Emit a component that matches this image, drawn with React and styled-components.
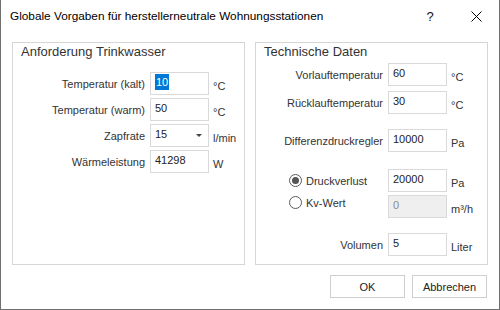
import styled, { createGlobalStyle } from "styled-components";

const GlobalStyle = createGlobalStyle`
  html, body {
    margin: 0;
    padding: 0;
    background: #ffffff;
  }
  * {
    box-sizing: border-box;
  }
`;

const Window = styled.div`
  width: 500px;
  height: 310px;
  display: flex;
  flex-direction: column;
  background: #ffffff;
  border: 1px solid #6f6f6f;
  border-top: none;
  font-family: "Liberation Sans", Arial, sans-serif;
  color: #333;
`;

const TitleBar = styled.div`
  height: 32px;
  display: flex;
  align-items: center;
  padding-left: 9px;
`;

const Title = styled.div`
  flex: 1;
  font-size: 11.8px;
  color: #000;
`;

const CaptionButton = styled.div`
  width: 46px;
  height: 32px;
  display: flex;
  align-items: center;
  justify-content: center;
  font-size: 13px;
  color: #111;
`;

const Body = styled.div`
  display: flex;
  gap: 10px;
  padding: 10px 11px 0 11px;
`;

const Group = styled.div`
  width: 233px;
  height: 223px;
  border: 1px solid #d6d6d6;
  padding: 1px 0 0 0;
`;

const GroupTitle = styled.div`
  font-size: 13px;
  line-height: 16px;
  padding-left: 8px;
  color: #333;
  margin-bottom: ${(p) => p.$after}px;
`;

const FieldRow = styled.div`
  display: flex;
  align-items: center;
  height: 23px;
  margin-top: ${(p) => p.$gap || 0}px;
`;

const Label = styled.div`
  width: ${(p) => p.$w}px;
  padding-right: 5px;
  text-align: right;
  font-size: 11px;
  color: #333;
  white-space: nowrap;
`;

const RadioLabel = styled.label`
  width: ${(p) => p.$w}px;
  padding-left: 33px;
  display: flex;
  align-items: center;
  gap: 4px;
  font-size: 11px;
  color: #333;
  align-self: ${(p) => (p.$top ? "flex-start" : "center")};
  margin-top: ${(p) => (p.$top ? 1 : 0)}px;
`;

const RadioCircle = styled.span`
  width: 13px;
  height: 13px;
  border-radius: 50%;
  border: 1px solid #5a5a5a;
  display: flex;
  align-items: center;
  justify-content: center;
  background: #fff;

  &::after {
    content: "";
    width: 7px;
    height: 7px;
    border-radius: 50%;
    background: ${(p) => (p.$checked ? "#555" : "transparent")};
  }
`;

const TextBox = styled.div`
  width: 59px;
  height: 23px;
  border: 1px solid #d9d9d9;
  background: ${(p) => (p.$disabled ? "#efefef" : "#fff")};
  color: ${(p) => (p.$disabled ? "#8a8a8a" : "#222")};
  font-size: 11px;
  line-height: 14px;
  padding: 2px 0 0 4px;
  display: flex;
  align-items: flex-start;
  position: relative;
`;

const Selected = styled.span`
  background: #0078d7;
  color: #fff;
  padding: 1px;
  margin-top: -1px;
`;

const DropArrow = styled.span`
  position: absolute;
  right: 6px;
  top: 9px;
  width: 0;
  height: 0;
  border-left: 3px solid transparent;
  border-right: 3px solid transparent;
  border-top: 3px solid #444;
`;

const Unit = styled.div`
  margin-left: 4px;
  padding-top: 4px;
  font-size: 11px;
  color: #333;
  white-space: nowrap;
`;

const Footer = styled.div`
  display: flex;
  justify-content: flex-end;
  gap: 7px;
  padding: 10px 12px 0 0;
`;

const Button = styled.div`
  width: 75px;
  height: 23px;
  border: 1px solid #cfcfcf;
  background: #fff;
  display: flex;
  align-items: center;
  justify-content: center;
  font-size: 11px;
  color: #222;
`;

const CloseIcon = () => (
  <svg width="11" height="11" viewBox="0 0 11 11">
    <path d="M0.5 0.5 L10.5 10.5 M10.5 0.5 L0.5 10.5" stroke="#000" strokeWidth="1" />
  </svg>
);

const left = [
  { label: "Temperatur (kalt)", value: "10", unit: "°C", selected: true },
  { label: "Temperatur (warm)", value: "50", unit: "°C" },
  { label: "Zapfrate", value: "15", unit: "l/min", combo: true },
  { label: "Wärmeleistung", value: "41298", unit: "W" },
];

export default function App() {
  return (
    <>
      <GlobalStyle />
      <Window>
        <TitleBar>
          <Title>Globale Vorgaben für herstellerneutrale Wohnungsstationen</Title>
          <CaptionButton>?</CaptionButton>
          <CaptionButton>
            <CloseIcon />
          </CaptionButton>
        </TitleBar>
        <Body>
          <Group>
            <GroupTitle $after={12}>Anforderung Trinkwasser</GroupTitle>
            {left.map((f, i) => (
              <FieldRow key={f.label} $gap={i === 0 ? 0 : 3}>
                <Label $w={137}>{f.label}</Label>
                <TextBox>
                  {f.selected ? <Selected>{f.value}</Selected> : f.value}
                  {f.combo && <DropArrow />}
                </TextBox>
                <Unit>{f.unit}</Unit>
              </FieldRow>
            ))}
          </Group>
          <Group>
            <GroupTitle $after={3}>Technische Daten</GroupTitle>
            <FieldRow>
              <Label $w={132}>Vorlauftemperatur</Label>
              <TextBox>60</TextBox>
              <Unit>°C</Unit>
            </FieldRow>
            <FieldRow $gap={5}>
              <Label $w={132}>Rücklauftemperatur</Label>
              <TextBox>30</TextBox>
              <Unit>°C</Unit>
            </FieldRow>
            <FieldRow $gap={15}>
              <Label $w={132}>Differenzdruckregler</Label>
              <TextBox>10000</TextBox>
              <Unit>Pa</Unit>
            </FieldRow>
            <FieldRow $gap={17}>
              <RadioLabel $w={132}>
                <RadioCircle $checked />
                Druckverlust
              </RadioLabel>
              <TextBox>20000</TextBox>
              <Unit>Pa</Unit>
            </FieldRow>
            <FieldRow $gap={3}>
              <RadioLabel $w={132} $top>
                <RadioCircle />
                Kv-Wert
              </RadioLabel>
              <TextBox $disabled>0</TextBox>
              <Unit>m³/h</Unit>
            </FieldRow>
            <FieldRow $gap={15}>
              <Label $w={132}>Volumen</Label>
              <TextBox>5</TextBox>
              <Unit>Liter</Unit>
            </FieldRow>
          </Group>
        </Body>
        <Footer>
          <Button>OK</Button>
          <Button>Abbrechen</Button>
        </Footer>
      </Window>
    </>
  );
}
